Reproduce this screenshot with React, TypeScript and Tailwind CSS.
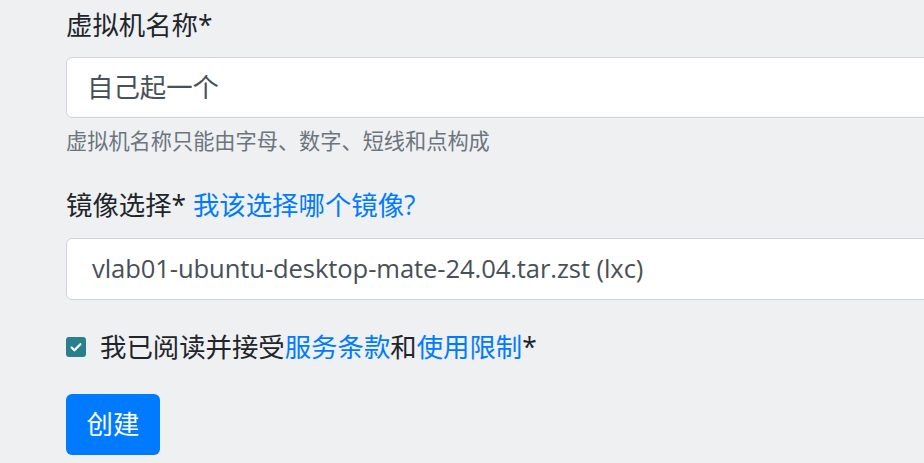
import React from "react";

const font = { fontFamily: '"Open Sans", "Noto Sans CJK SC", sans-serif' };

export default function App() {
  return (
    <div
      className="w-[924px] h-[463px] overflow-hidden bg-[#eef0f2] text-[#212529] pl-[66px] pt-[6px]"
      style={font}
    >
      <div className="w-[1000px]">
        <label className="block text-[26.4px] leading-[38px] mb-[13px]">虚拟机名称*</label>
        <div className="h-[61px] bg-white border border-[#ced4da] rounded-[6px] flex items-center px-[20px] text-[26.4px] text-[#495057]">
          自己起一个
        </div>
        <div className="mt-[6px] text-[21.2px] leading-[33px] text-[#6c757d]">
          虚拟机名称只能由字母、数字、短线和点构成
        </div>
        <label className="block text-[26.4px] leading-[38px] mt-[29px] mb-[14px]">
          镜像选择* <a className="text-[#007bff]">我该选择哪个镜像?</a>
        </label>
        <div className="h-[62px] bg-white border border-[#ced4da] rounded-[6px] flex items-center px-[25px] text-[25.6px] text-[#495057] tracking-[-0.1px]">
          vlab01-ubuntu-desktop-mate-24.04.tar.zst (lxc)
        </div>
        <div className="flex items-center gap-[14px] text-[26.4px] leading-[38px] mt-[28px] mb-[28px]">
          <div className="w-[20px] h-[20px] rounded-[3px] bg-[#2a7f8e] flex items-center justify-center">
            <svg width="14" height="14" viewBox="0 0 16 16">
              <path d="M3 8.5l3.2 3.2L13 4.8" fill="none" stroke="white" strokeWidth="2.6" strokeLinecap="round" strokeLinejoin="round" />
            </svg>
          </div>
          <span>
            我已阅读并接受<a className="text-[#007bff]">服务条款</a>和<a className="text-[#007bff]">使用限制</a>*
          </span>
        </div>
        <button className="h-[61px] w-[94px] bg-[#007bff] text-white text-[26.4px] rounded-[6px] leading-[1.5]">
          创建
        </button>
      </div>
    </div>
  );
}
